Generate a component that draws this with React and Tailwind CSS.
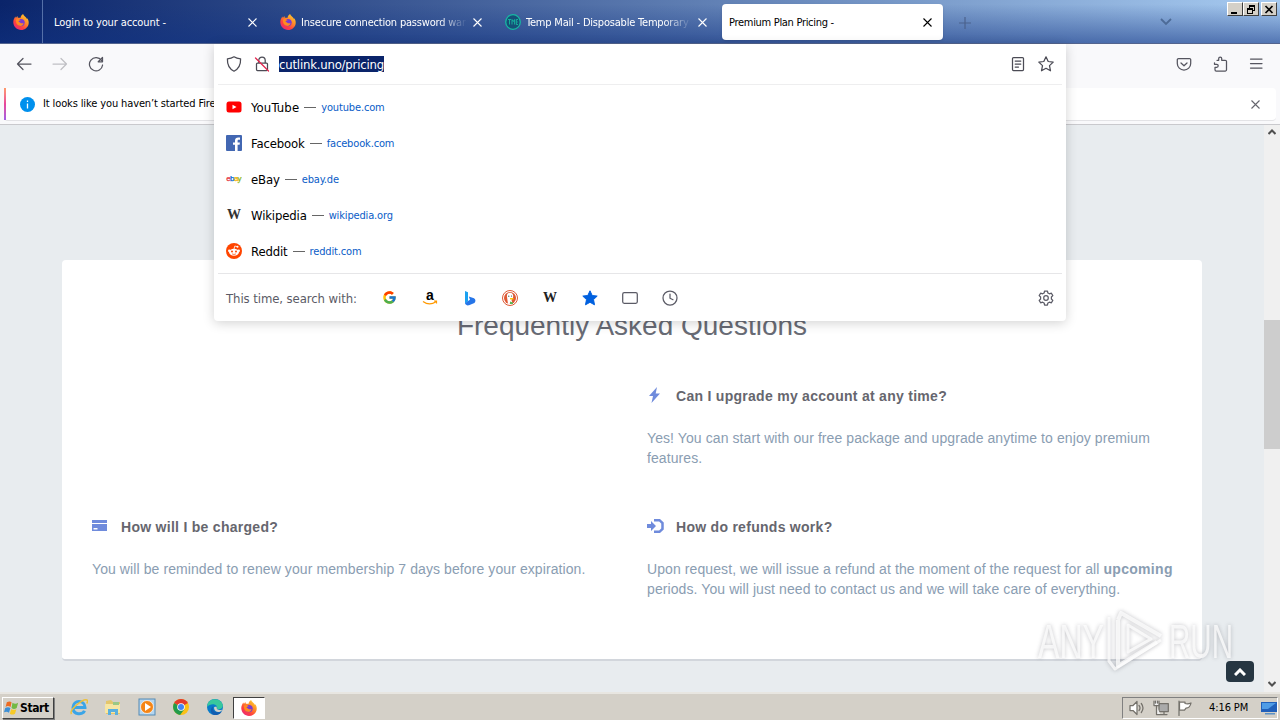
import React from 'react';
import { FcGoogle } from 'react-icons/fc';

const sites = [
  { name: 'YouTube', url: 'youtube.com', icon: 'youtube' },
  { name: 'Facebook', url: 'facebook.com', icon: 'facebook' },
  { name: 'eBay', url: 'ebay.de', icon: 'ebay' },
  { name: 'Wikipedia', url: 'wikipedia.org', icon: 'wikipedia' },
  { name: 'Reddit', url: 'reddit.com', icon: 'reddit' },
];

const Firefox = ({ size = 16, id }) => (
  <svg width={size} height={size} viewBox="0 0 16 16" className="shrink-0">
    <defs>
      <linearGradient id={id} x1="1" y1="0" x2="0.25" y2="1">
        <stop offset="0" stopColor="#ffe23c" />
        <stop offset="0.4" stopColor="#ff9526" />
        <stop offset="0.75" stopColor="#ff4040" />
        <stop offset="1" stopColor="#e92a78" />
      </linearGradient>
    </defs>
    <path d="M.3 8.6C.1 6 1.3 4 2.4 2.5l.5 1.6L4.3 2l.6 1.8c1-.2 1.8 0 2.5.3C7.6 2.400 8.500 1 10.200 0c.2 1.300 1.200 2 2.300 3 .8.7 1.200 1.300 1.500 2l.3-.8c1.100 1.600 1.600 3.100 1.400 5-.3 3.900-3.600 6.800-7.700 6.800S.6 12.700.3 8.600z" fill={`url(#${id})`} />
    <circle cx="8" cy="8.600" r="3.700" fill="#7a3bd0" />
    <path d="M3 5.500c1.600-1 3.400-.6 4.700.7-1.500.1-1.900.9-2.200 1.600 1.200.2 1.800 1.700 3.100 1.500 1.100-.2 1.800-.3 2 .3-.7 2-2.400 2.700-4 2.200C3.700 11.200 2.600 8.200 3 5.500z" fill="#ff8b20" />
  </svg>
);

const Close = ({ className = '' }) => (
  <svg width="9" height="9" viewBox="0 0 9 9" fill="none" stroke="currentColor" strokeWidth="1.100" className={className}>
    <path d="M.5.5l8 8M8.500.5l-8 8" />
  </svg>
);

const Stroke = ({ children, size = 16, className = '' }) => (
  <svg width={size} height={size} viewBox="0 0 16 16" fill="none" stroke="currentColor" strokeWidth="1.250" strokeLinecap="round" strokeLinejoin="round" className={className}>
    {children}
  </svg>
);

const SiteIcon = ({ icon }) => {
  if (icon === 'youtube') {
    return (
      <svg width="16" height="16" viewBox="0 0 16 16">
        <rect x="0.500" y="2.500" width="15" height="11" rx="2.500" fill="#f00" />
        <path d="M6.500 5.700v4.600L10.500 8z" fill="#fff" />
      </svg>
    );
  }
  if (icon === 'facebook') {
    return (
      <svg width="16" height="16" viewBox="0 0 16 16">
        <rect width="16" height="16" rx="1" fill="#4267b2" />
        <path d="M9 16V9.800H7V7.400h2V5.600C9 3.500 10.300 2.400 12.200 2.400l1.800.1v2.200h-1.200c-1 0-1.200.5-1.200 1.200v1.500h2.300l-.3 2.400h-2V16z" fill="#fff" />
      </svg>
    );
  }
  if (icon === 'ebay') {
    return (
      <svg width="16" height="16" viewBox="0 0 16 16" fontFamily="Liberation Sans" fontSize="8" strokeWidth=".25">
        <text x="0.300" y="10" fill="#e53238" stroke="#e53238">e</text>
        <text x="4" y="10" fill="#0064d2" stroke="#0064d2">b</text>
        <text x="8" y="10" fill="#f5af02" stroke="#f5af02">a</text>
        <text x="11.500" y="10" fill="#86b817" stroke="#86b817">y</text>
      </svg>
    );
  }
  if (icon === 'wikipedia') {
    return <span className="w-4 text-center font-['Liberation_Serif',serif] text-[14px] font-bold leading-4 text-[#333]">W</span>;
  }
  return (
    <svg width="16" height="16" viewBox="0 0 16 16">
      <circle cx="8" cy="8" r="8" fill="#ff4500" />
      <path d="M8 6l.8-3 2.400.6" fill="none" stroke="#fff" strokeWidth=".8" />
      <circle cx="11.500" cy="3.700" r="1" fill="#fff" />
      <circle cx="3.300" cy="7.700" r="1.300" fill="#fff" />
      <circle cx="12.700" cy="7.700" r="1.300" fill="#fff" />
      <ellipse cx="8" cy="9.200" rx="4.900" ry="3.500" fill="#fff" />
      <circle cx="6" cy="8.500" r="1" fill="#ff4500" />
      <circle cx="10" cy="8.500" r="1" fill="#ff4500" />
      <path d="M6 10.800c1.200.8 2.800.8 4 0" fill="none" stroke="#ff4500" strokeWidth=".7" />
    </svg>
  );
};

const Tab = ({ icon, title, textClass = '' }) => (
  <div className="flex h-9 w-[225px] shrink-0 items-center pl-[9px] pr-[14px] text-white">
    {icon}
    <span className={`min-w-0 flex-1 overflow-hidden whitespace-nowrap pt-[3px] ${textClass}`}>{title}</span>
    <Close className="ml-1.5 shrink-0" />
  </div>
);

const TabBar = () => (
  <div className="flex h-11 shrink-0 border-b border-[#53648e] bg-[linear-gradient(to_bottom,transparent_10%,rgba(16,50,130,0.55)),linear-gradient(to_right,#0a246a,#a6caf0)] text-[11px]">
    <div className="flex w-[43px] shrink-0 justify-center border-r border-[#5570a8] pr-px pt-3.5">
      <Firefox id="fx-home" />
    </div>
    <div className="flex pl-[3px] pt-1">
      <Tab title="Login to your account -" textClass="tracking-[-0.110px] -ml-px" />
      <Tab
        title="Insecure connection password war"
        textClass="ml-[5px] tracking-[-0.200px] [mask-image:linear-gradient(to_left,transparent,black_28px)]"
        icon={<Firefox id="fx-tab" />}
      />
      <Tab
        title="Temp Mail - Disposable Temporary E"
        textClass="ml-[5px] tracking-[-0.200px] [mask-image:linear-gradient(to_left,transparent,black_28px)]"
        icon={
          <svg width="16" height="16" viewBox="0 0 16 16" fill="none" stroke="#16b8a2" className="shrink-0">
            <circle cx="8" cy="8" r="7.300" fill="#155077" strokeWidth="1.300" />
            <path d="M3 5.500h3M4.500 5.500v5M7 10.500v-5l1.300 2 1.300-2v5M13 5.500h-1.700v5H13M11.500 8h1.300" strokeWidth=".9" />
          </svg>
        }
      />
      <div className="ml-px flex h-9 w-[221px] items-center justify-between rounded bg-white pl-[7px] pr-[11px] text-black shadow">
        <span className="pt-[3px] tracking-[-0.300px]">Premium Plan Pricing -</span>
        <Close />
      </div>
      <svg width="12" height="12" viewBox="0 0 12 12" stroke="#4b628d" strokeWidth="1.200" className="ml-4 mt-[13px]">
        <path d="M6 0v12M0 6h12" />
      </svg>
    </div>
    <svg width="12" height="8" viewBox="0 0 12 8" fill="none" stroke="#4d6b97" strokeWidth="1.800" className="ml-auto mt-[18px]">
      <path d="M1 1l5 5 5-5" />
    </svg>
    <div className="ml-[55px] mr-[3px] mt-0.5 flex h-[14px]">
      {['min', 'restore', 'close'].map((kind) => (
        <div
          key={kind}
          className={`flex h-[14px] w-4 items-center justify-center border border-b-[#404040] border-l-white border-r-[#404040] border-t-white bg-[#d4d0c8] ${kind === 'close' ? 'ml-0.5' : ''}`}
        >
          <svg width="12" height="11" viewBox="0 0 12 11" fill="none" stroke="#000" shapeRendering={kind === 'close' ? 'auto' : 'crispEdges'}>
            {kind === 'min' && <path d="M2 9h6" strokeWidth="2" />}
            {kind === 'restore' && <path d="M4.500 4V1.500h5v5H8M4 2h6M2.500 4.500h5v5h-5zM2 5h6" />}
            {kind === 'close' && <path d="M2.500 2l7 7M9.500 2l-7 7" strokeWidth="1.700" />}
          </svg>
        </div>
      ))}
    </div>
  </div>
);

const Toolbar = () => (
  <div className="flex h-11 shrink-0 items-center bg-[#f9f9fb] pb-1 pl-4 pr-4 text-[#55555f]">
    <Stroke className="mr-5"><path d="M15 8H1.500M7 2.500L1.500 8 7 13.500" /></Stroke>
    <Stroke className="mr-5 text-[#c0c0c5]"><path d="M1 8h13.500M9 2.500L14.500 8 9 13.500" /></Stroke>
    <Stroke><path d="M13.500 4.500A6.600 6.600 0 1 0 14.600 9M14.500 1.500v4.300h-4.300z" /></Stroke>
    <div className="ml-auto flex gap-5">
      <Stroke>
        <path d="M2.500 2.500h11a1.200 1.200 0 0 1 1.200 1.200v3.800a6.700 6.500 0 0 1-13.400 0V3.700A1.200 1.200 0 0 1 2.500 2.500zM5 7l3 2.800L11 7" />
      </Stroke>
      <Stroke>
        <path d="M5 4.300h1.700V2.500a1.500 1.500 0 0 1 3 0v1.800h3.500a1.300 1.300 0 0 1 1.300 1.300v8.100a1.300 1.300 0 0 1-1.300 1.300H4.300A1.300 1.300 0 0 1 3 13.700v-2.400h1.700a1.500 1.500 0 0 0 0-3H2.500V6.800" />
      </Stroke>
      <Stroke><path d="M2.500 3h11.500M2.500 7.500h11.500M2.500 12h11.500" /></Stroke>
    </div>
  </div>
);

const Notification = () => (
  <div className="h-[37px] shrink-0 border-b border-[#c9c9cd] bg-[#f9f9fb] pl-1 pr-1">
    <div className="flex h-[33px] items-center rounded border-b border-[#e3e3e6] bg-white text-[11px]">
      <div className="h-8 w-0.5 bg-gradient-to-b from-[#ff9a6a] via-[#e8459a] to-[#a15be5]" />
      <svg width="15" height="15" viewBox="0 0 15 15" className="ml-3.5 mr-2">
        <circle cx="7.500" cy="7.500" r="7.500" fill="#0090ed" />
        <path d="M7.500 6.500v5M7.500 3.500v1.500" stroke="#fff" strokeWidth="1.300" />
      </svg>
      <span className="whitespace-nowrap tracking-[-0.120px]">It looks like you haven’t started Fire</span>
      <Close className="ml-auto mr-[16px] text-[#65656d]" />
    </div>
  </div>
);

const AddressPanel = () => (
  <div className="absolute left-[214px] top-11 flex h-[277px] w-[852px] flex-col rounded-b bg-white shadow-[0_2px_12px_rgba(0,0,0,0.18)]">
    <div className="mx-1 flex h-[41px] items-center border-b border-[#eeeeef] px-2 text-[#4b4b55]">
      <Stroke><path d="M8 .8c2 1.300 4 1.800 6.600 2 .2 5.500-1.600 10-6.600 12.400C3 12.800 1.200 8.300 1.400 2.800 4 2.600 6 2.100 8 .8z" /></Stroke>
      <Stroke className="ml-3">
        <path d="M3.500 7h9a1 1 0 0 1 1 1v5.500a1 1 0 0 1-1 1h-9a1 1 0 0 1-1-1V8a1 1 0 0 1 1-1zM4.800 7V4.300a3.200 3.200 0 0 1 6.400 0V7" />
        <path d="M1.500 2l13 13" stroke="#e22850" />
      </Stroke>
      <span className="ml-[9px] h-4 whitespace-nowrap bg-[#0a246a] text-[13px] leading-[18px] tracking-[-0.200px] text-white">cutlink.uno/pricing</span>
      <Stroke className="ml-auto"><path d="M3.500 1.500h9a1 1 0 0 1 1 1v11a1 1 0 0 1-1 1h-9a1 1 0 0 1-1-1v-11a1 1 0 0 1 1-1zM5.200 5h5.600M5.200 8h5.600M5.200 11h3.300" /></Stroke>
      <Stroke className="ml-3"><path d="M8 .8l2.200 4.700 5 .6-3.700 3.500 1 5.200L8 12.300l-4.500 2.500 1-5.200L.8 6.100l5-.6z" /></Stroke>
    </div>
    <div className="flex flex-1 flex-col pt-1">
      {sites.map((site) => (
        <div key={site.name} className="flex h-9 items-center pl-3">
          <SiteIcon icon={site.icon} />
          <span className={`ml-[9px] pt-0.5 text-[13px] text-black ${site.name === 'YouTube' ? 'tracking-[0.150px]' : 'tracking-[-0.150px]'}`}>{site.name}</span>
          <span className="mx-[5px] mt-px h-px w-3 bg-[#666]" />
          <span className="pt-0.5 text-[11px] tracking-[-0.150px] text-[#0a5cc7]">{site.url}</span>
        </div>
      ))}
    </div>
    <div className="mx-1 flex h-12 items-center border-t border-[#e6e6e8] px-2 text-[#5b5b66]">
      <span className="w-[152px] whitespace-nowrap pt-0.5 text-[13px] tracking-[-0.080px]">This time, search with:</span>
      <div className="flex flex-1 items-center gap-6 pl-1">
        <FcGoogle size={15} className="mr-px" />
        <svg width="16" height="16" viewBox="0 0 16 16" className="overflow-visible">
          <text x="4" y="9.500" fontFamily="Liberation Sans" fontWeight="bold" fontSize="14" fill="#000">a</text>
          <path d="M1 11.500c4 3 9 3 13 .2M12 11h2.500v2.500" fill="none" stroke="#f90" strokeWidth="1.200" />
        </svg>
        <svg width="16" height="16" viewBox="0 0 16 16">
          <path d="M3 1l3 1.200v9L3 13.500z" fill="#1ba1f0" />
          <path d="M3 13.300l3-2.300 2-1.200L6.800 6.500 12 8.300c1.800.8 1.900 3.400.4 4.700L7 15.300c-1.700.5-3.400-.2-4-2z" fill="#2675e8" />
        </svg>
        <svg width="16" height="16" viewBox="0 0 16 16">
          <circle cx="8" cy="8" r="7.500" fill="#fff" stroke="#de5833" />
          <circle cx="8" cy="8" r="6" fill="#de5833" />
          <path d="M6 14L5 7c-.5-3 1-4.300 3-4.200 2.800 0 3.700 2.200 3 5L9.500 10l1 3.500z" fill="#fff" />
          <circle cx="9.500" cy="6" r=".6" fill="#243" />
          <circle cx="6.800" cy="6.200" r=".6" fill="#243" />
          <path d="M8 8h3.500v1.500H8z" fill="#fdc20a" />
          <path d="M8 11.500l3 1v1.500H8z" fill="#5ab552" />
        </svg>
        <span className="w-4 text-center font-['Liberation_Serif',serif] text-[14px] font-bold leading-4 text-[#222]">W</span>
        <svg width="16" height="16" viewBox="0 0 16 16" fill="#0060df" stroke="#0060df" strokeLinejoin="round">
          <path d="M8 .8l2.200 4.700 5 .6-3.700 3.500 1 5.200L8 12.300l-4.500 2.500 1-5.200L.8 6.100l5-.6z" />
        </svg>
        <Stroke><rect x=".7" y="2.700" width="14.600" height="10.600" rx="1.500" /></Stroke>
        <Stroke><circle cx="8" cy="8" r="7" /><path d="M8 4v4.300l3 1.400" /></Stroke>
      </div>
      <Stroke>
        <path d="M6.600 1h2.800l.5 2 1.500.8 2-.6 1.400 2.400L13.400 7v2l1.400 1.400-1.400 2.400-2-.6-1.500.8-.5 2H6.600l-.5-2-1.500-.8-2 .6-1.400-2.400L2.600 9V7L1.200 5.600l1.400-2.400 2 .6L6.100 3z" />
        <circle cx="8" cy="8" r="2.300" />
      </Stroke>
    </div>
  </div>
);

const Question = ({ icon, title, children }) => (
  <div className="h-[131px] px-[15px]">
    <div className="flex h-5 items-center">
      <div className="w-[29px] pb-0.5 text-[#6f8bdc]">{icon}</div>
      <h4 className="text-[14px] font-bold tracking-[0.280px] text-[#66666e]">{title}</h4>
    </div>
    <p className="mt-[22px] whitespace-nowrap text-[14px] leading-5 tracking-[0.090px] text-[#8a9db2]">{children}</p>
  </div>
);

const Page = () => (
  <div className="flex min-h-0 flex-1">
    <div className="flex-1 overflow-hidden bg-[#e8ecef] px-[62px] pt-[135px] font-['Liberation_Sans',Arial,sans-serif]">
      <div className="h-[401px] rounded-sm border-b-2 border-[#d2d6dc] bg-white px-[15px] pt-[46px]">
        <h2 className="h-[80px] whitespace-nowrap text-center text-[28px] leading-10 text-[#686b75]">Frequently Asked Questions</h2>
        <div className="grid grid-cols-2">
          <div />
          <Question
            title="Can I upgrade my account at any time?"
            icon={<svg width="16" height="16" viewBox="0 0 16 16" fill="currentColor"><path d="M10 0L2 9h4L4.500 16 13 6.500H8.700z" /></svg>}
          >
            Yes! You can start with our free package and upgrade anytime to enjoy premium<br />features.
          </Question>
          <Question
            title="How will I be charged?"
            icon={<svg width="16" height="14" viewBox="0 0 16 14" fill="currentColor"><path d="M0 1h15v3H0zM0 5h15v7H0z" /><path d="M1.500 9h4v1.500h-4z" fill="#fff" /></svg>}
          >
            You will be reminded to renew your membership 7 days before your expiration.
          </Question>
          <Question
            title="How do refunds work?"
            icon={<svg width="17" height="16" viewBox="0 0 17 16"><path d="M0 6h4V3l5 5-5 5v-3H0z" fill="currentColor" /><path d="M7 2.200h5.500L15.500 5v6l-3 2.800H7" fill="none" stroke="currentColor" strokeWidth="2.500" /></svg>}
          >
            Upon request, we will issue a refund at the moment of the request for all <b className="tracking-[0.300px]">upcoming</b><br />
            periods. You will just need to contact us and we will take care of everything.
          </Question>
        </div>
      </div>
    </div>
    <div className="flex w-4 flex-col items-center bg-[#f0f0f0] pb-[5px] pt-1">
      <svg width="8" height="6" viewBox="0 0 8 6" fill="none" stroke="#505050" strokeWidth="2"><path d="M.5 5L4 1.500 7.500 5" /></svg>
      <div className="mt-[185px] h-[129px] w-full bg-[#cdcdcd]" />
      <svg width="8" height="6" viewBox="0 0 8 6" fill="none" stroke="#505050" strokeWidth="2" className="mt-auto"><path d="M.5 1L4 4.500 7.500 1" /></svg>
    </div>
  </div>
);

const Watermark = () => (
  <svg width="206" height="66" viewBox="0 0 206 66" className="pointer-events-none absolute left-[1034px] top-[607px] drop-shadow-[0_0_2px_rgba(80,80,90,0.45)]">
    <g fill="#ffffff" fillOpacity=".75" fontFamily="Liberation Sans Narrow, Liberation Sans" fontSize="48">
      <text x="4" y="51" textLength="66" lengthAdjust="spacingAndGlyphs">ANY</text>
      <text x="135" y="51" textLength="64" lengthAdjust="spacingAndGlyphs">RUN</text>
    </g>
    <g fill="none" stroke="#fff" strokeOpacity=".75" strokeWidth="4" strokeLinejoin="round">
      <path d="M84 13v46l39-24M84 13l3-7 40 23" />
      <path d="M75 10v44l6 8 46-29M94 18v27l23-13z" strokeWidth="3" />
    </g>
  </svg>
);

const taskIcons = [
  <svg width="18" height="18" viewBox="0 0 18 18" fill="none">
    <path d="M3 9.500h12c0-8-12-8-12 0s10 7.500 11.500 3.300" stroke="#3ba5e7" strokeWidth="3" />
    <path d="M1.500 16c-3-4 12-16 15.500-14 .8.600.6 2-.3 3.500" stroke="#edc13a" strokeWidth="1.500" />
  </svg>,
  <svg width="18" height="18" viewBox="0 0 18 18">
    <path d="M2 3l5-1 2 2h7v12H2z" fill="#e4c66b" />
    <path d="M1 6h15v9H1z" fill="#f7e6a3" />
    <path d="M4 17v-6h10v6h-3v-3H7v3z" fill="#5ab0de" />
    <path d="M9 4h6v3H9z" fill="#9bc886" />
  </svg>,
  <svg width="18" height="18" viewBox="0 0 18 18">
    <rect x="1" y="1" width="16" height="16" fill="#b4d5ef" stroke="#548ab4" />
    <circle cx="9" cy="9" r="6.500" fill="#f58516" stroke="#fff" strokeWidth=".7" />
    <path d="M7 5l6 4-6 4z" fill="#fff" />
  </svg>,
  <svg width="16" height="16" viewBox="0 0 16 16">
    <circle cx="8" cy="8" r="8" fill="#fbc116" />
    <path d="M8 8L1.100 4A8 8 0 0 1 14.900 4z" fill="#e33b2e" />
    <path d="M8 8L1.100 4a8 8 0 0 0 6 11.900L11.500 10z" fill="#229b4c" />
    <circle cx="8" cy="8" r="3.800" fill="#fff" />
    <circle cx="8" cy="8" r="3" fill="#4285f4" />
  </svg>,
  <svg width="16" height="16" viewBox="0 0 16 16">
    <circle cx="8" cy="8" r="8" fill="#087bc9" />
    <path d="M.5 5.500C2-.5 12-2 15.500 5c1.300 4-2 5.800-5.500 5 .7-2-.4-4.500-3.500-4.800C4 5 1.700 6 0 8z" fill="#38c89d" />
    <path d="M6.500 7c-2 3 .5 7 6.500 6.200 1-.1 1.300-.6 2-1.200-1.300 3-4.500 4.500-8 4C2.700 14.500 3 9 6.500 7z" fill="#125db0" />
    <path d="M7 9c0-1 1-1.500 2.700-1.200-.7 3 2.500 4 5.800 2.700-3 4.500-8 2.500-8.500-1.500z" fill="#d4d0c8" />
  </svg>,
];

const Taskbar = () => (
  <div className="flex h-7 shrink-0 items-center border-t-2 border-[#e8e6e1] bg-[#d4d0c8] pl-0.5 text-[11px] text-black">
    <div className="mt-0.5 flex h-[22px] w-[52px] items-center border border-b-[#404040] border-l-white border-r-[#404040] border-t-white pl-px shadow-[1px_1px_0_#808080]">
      <svg width="16" height="16" viewBox="0 0 17 16" className="shrink-0">
        <path d="M3 2q3-2 5 0L7 7Q4 5 1.700 7z" fill="#ed6b22" />
        <path d="M9 2.500q3 2 6 0L13.500 8q-3 2-5.500 0z" fill="#73b943" />
        <path d="M1.300 8q3-1.500 5.500 0L5.300 13Q3 11 0 12.500z" fill="#3c8fd6" />
        <path d="M7.700 9q3 1.800 5.500 0L11.700 14q-3 1.800-5.500 0z" fill="#f7ca28" />
      </svg>
      <span className="text-[12px] font-bold tracking-[-0.400px]">Start</span>
    </div>
    <div className="ml-4 flex gap-4">
      {taskIcons.map((icon, i) => (
        <div key={i} className="flex h-[18px] w-[18px] items-center justify-center">{icon}</div>
      ))}
    </div>
    <div className="ml-[9px] mt-0.5 flex h-[22px] w-[32px] items-center justify-center border border-b-white border-l-[#404040] border-r-white border-t-[#404040] bg-white">
      <Firefox id="fx-task" />
    </div>
    <div className="ml-auto mr-0.5 mt-0.5 flex h-[22px] w-[156px] items-center border border-b-white border-l-[#808080] border-r-white border-t-[#808080] pl-[6px]">
      <div className="flex gap-2 text-[#74716b]">
        <Stroke><path d="M1 5.500h3l4-4v13l-4-4H1z" fill="#fff" /><path d="M10 5.500q2 2.500 0 5M12.300 3.500q3.400 4.500 0 9" /></Stroke>
        <Stroke><path d="M6 3.500h9.300v8H6z" fill="#aaa" /><path d="M8 14.500h6M11 12v2M3.500 6v8.500h4M1 1v4.500h5V1M2.500 1v2M4.500 1v2" fill="#eee" /></Stroke>
        <Stroke><path d="M2 1v14.500M2.500 2h5.500v1.500q3 1 6-.5-1 5-5 5L7.500 10h-5z" fill="#fff" /></Stroke>
      </div>
      <span className="ml-[16px] whitespace-nowrap tracking-[-0.100px]">4:16 PM</span>
      <svg width="16" height="14" viewBox="0 0 16 14" className="ml-auto">
        <path d="M0 1h16v10H0z" fill="#2160ba" />
        <path d="M1 2h14L7 8H1z" fill="#4f9ce6" />
        <path d="M4 12h10v1.500H4z" fill="#5b91c5" />
      </svg>
    </div>
  </div>
);

export default function App() {
  return (
    <div className="relative flex h-[720px] w-[1280px] flex-col overflow-hidden font-['DejaVu_Sans_Condensed','DejaVu_Sans',sans-serif]">
      <TabBar />
      <Toolbar />
      <Notification />
      <Page />
      <Taskbar />
      <AddressPanel />
      <Watermark />
      <button className="absolute left-[1226px] top-[661px] flex h-[21px] w-7 items-center justify-center rounded-sm bg-[#263642]">
        <svg width="12" height="8" viewBox="0 0 12 8" fill="none" stroke="#fff" strokeWidth="3"><path d="M1 7l5-5 5 5" /></svg>
      </button>
    </div>
  );
}
